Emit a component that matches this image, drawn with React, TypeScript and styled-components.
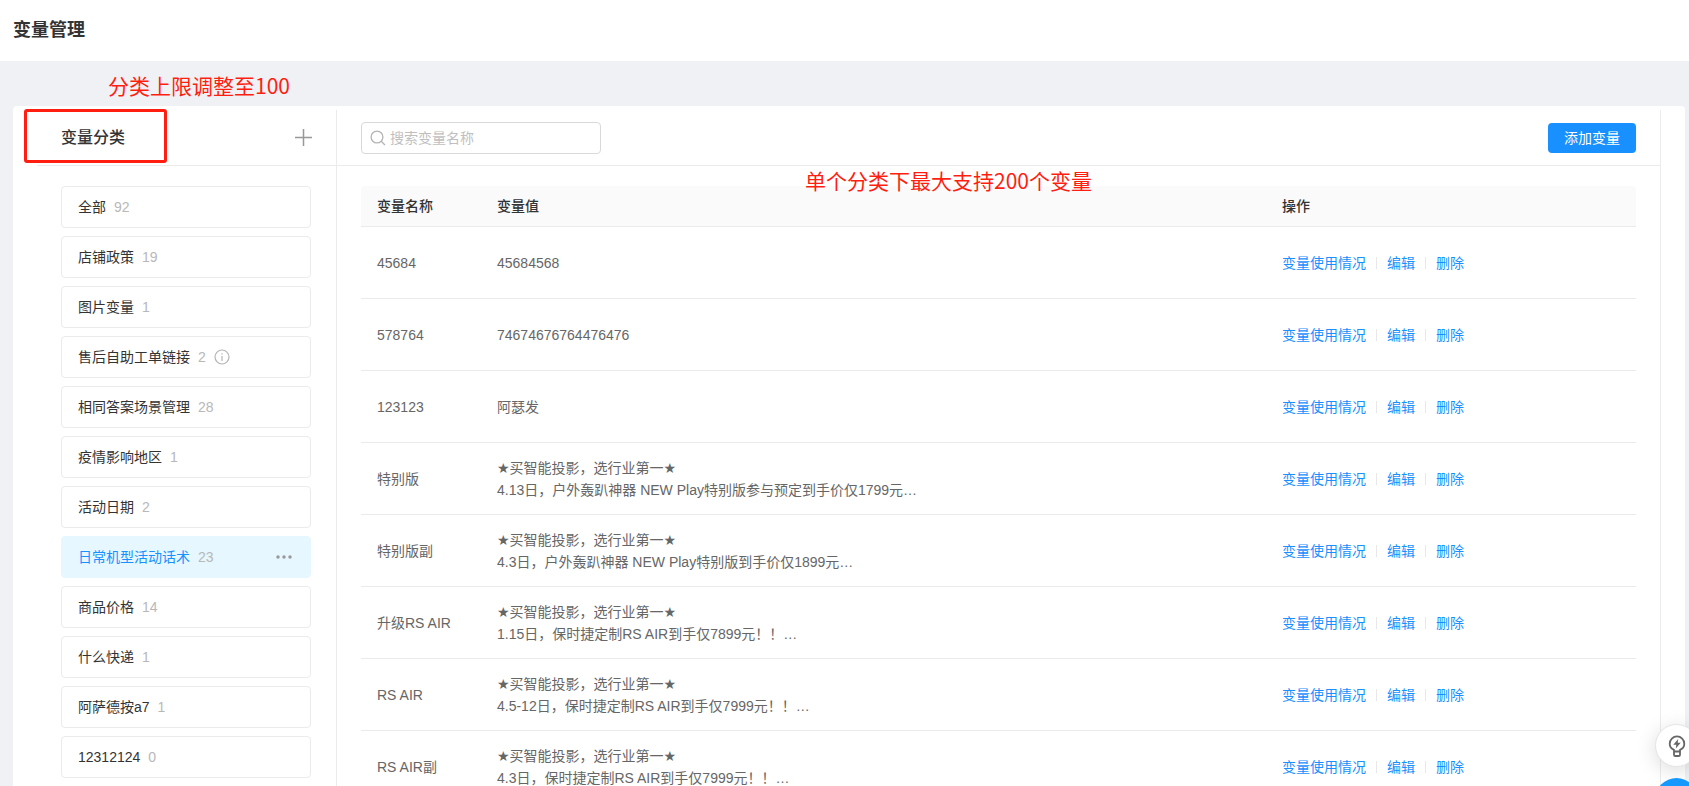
import React from "react";
import styled, { createGlobalStyle } from "styled-components";

const GlobalStyle = createGlobalStyle`
  * { box-sizing: border-box; }
  body {
    margin: 0;
    color: #333;
    background: #f0f1f5;
    font-family: "Liberation Sans", "DejaVu Sans", "Noto Sans CJK SC", sans-serif;
    font-size: 14px;
    line-height: 22px;
  }
  button, input { font: inherit; }
`;

const Page = styled.div`
  display: flex;
  flex-direction: column;
  height: 100vh;
  overflow: hidden;
`;

const TopBar = styled.header`
  flex: none;
  padding: 16px 13px 17px;
  background: #fff;
`;

const PageTitle = styled.h1`
  margin: 0;
  font-size: 18px;
  line-height: 28px;
  font-weight: 700;
`;

const Scroller = styled.main`
  position: relative;
  flex: 1;
  min-height: 0;
  overflow-y: auto;
  scrollbar-width: none;
  padding: 45px 4px 0 13px;
`;

const Card = styled.div`
  display: flex;
  min-height: 100%;
  padding: 4px 24px 0;
  background: #fff;
  border-radius: 4px;
`;

const Sidebar = styled.aside`
  flex: 0 0 300px;
  border-right: 1px solid #ebebeb;
`;

const Content = styled.section`
  flex: 1;
  min-width: 0;
  border-right: 1px solid #ebebeb;
`;

const PanelHeader = styled.div`
  display: flex;
  align-items: center;
  justify-content: space-between;
  height: 56px;
  padding: 0 24px;
  border-bottom: 1px solid #ebebeb;
`;

const SidebarTitle = styled.h2`
  margin: 0;
  font-size: 16px;
  line-height: 24px;
  font-weight: 500;
`;

const IconButton = styled.button`
  display: flex;
  padding: 0;
  border: 0;
  background: none;
  color: #999;
  cursor: pointer;
`;

const CategoryList = styled.ul`
  display: flex;
  flex-direction: column;
  gap: 8px;
  margin: 0;
  padding: 20px 25px 20px 24px;
  list-style: none;
`;

const CategoryItem = styled.li<{ $active?: boolean }>`
  display: flex;
  align-items: center;
  gap: 8px;
  height: 42px;
  padding: 0 16px;
  border: 1px solid ${(p) => (p.$active ? "#e6f7ff" : "#ebebeb")};
  border-radius: 4px;
  background: ${(p) => (p.$active ? "#e6f7ff" : "#fff")};
  color: ${(p) => (p.$active ? "#1890ff" : "#333")};
`;

const CategoryButton = styled.button`
  display: flex;
  gap: 8px;
  padding: 0;
  border: 0;
  background: none;
  color: inherit;
  cursor: pointer;
`;

const Count = styled.span`
  color: #b8b8b8;
`;

const InfoIcon = styled.svg`
  flex: none;
  color: #b4b4b4;
`;

const MoreButton = styled(IconButton)`
  margin-left: auto;
`;

const SearchBox = styled.label`
  display: flex;
  align-items: center;
  gap: 4px;
  width: 240px;
  height: 32px;
  padding: 0 8px;
  border: 1px solid #d9d9d9;
  border-radius: 4px;
  color: #b4b4b4;
`;

const SearchInput = styled.input`
  flex: 1;
  min-width: 0;
  padding: 0;
  border: 0;
  outline: 0;
  background: none;
  color: #333;
  &::placeholder { color: #bfbfbf; opacity: 1; }
`;

const PrimaryButton = styled.button`
  height: 30px;
  padding: 0 16px;
  border: 0;
  border-radius: 4px;
  background: #1890ff;
  color: #fff;
  cursor: pointer;
`;

const TableWrap = styled.div`
  padding: 20px 24px;
`;

const Table = styled.table`
  width: 100%;
  table-layout: fixed;
  border-collapse: separate;
  border-spacing: 0;
`;

const HeadCell = styled.th<{ $width?: number }>`
  width: ${(p) => (p.$width ? `${p.$width}px` : "auto")};
  height: 41px;
  padding: 0 16px;
  border-bottom: 1px solid #ebebeb;
  background: #fafafa;
  font-weight: 500;
  text-align: left;
  &:first-child { border-top-left-radius: 4px; }
  &:last-child { border-top-right-radius: 4px; }
`;

const Cell = styled.td`
  height: 72px;
  padding: 0 16px;
  border-bottom: 1px solid #ebebeb;
  color: #666;
  white-space: pre-line;
`;

const Actions = styled.div`
  display: flex;
  align-items: center;
`;

const ActionLink = styled.a`
  color: #1890ff;
  text-decoration: none;
  & + & {
    display: flex;
    align-items: center;
  }
  & + &::before {
    content: "";
    width: 1px;
    height: 12px;
    margin: 0 10px;
    background: #e8e8e8;
  }
`;

const Note = styled.p<{ $x: string; $y: number }>`
  position: absolute;
  left: ${(p) => p.$x};
  top: ${(p) => p.$y}px;
  margin: 0;
  color: #ff1e10;
  font-family: "Noto Sans CJK SC", sans-serif;
  font-size: 21px;
  line-height: 28px;
  font-weight: 400;
  white-space: nowrap;
  pointer-events: none;
`;

const Highlight = styled.div`
  position: absolute;
  left: 24px;
  top: 48px;
  width: 143px;
  height: 54px;
  border: 3px solid #ff1e10;
  border-radius: 3px;
  pointer-events: none;
`;

const FloatingTools = styled.div`
  position: fixed;
  right: -9px;
  bottom: -35px;
  display: flex;
  flex-direction: column;
  gap: 11px;
`;

const RoundButton = styled.button<{ $primary?: boolean }>`
  display: flex;
  align-items: center;
  justify-content: center;
  width: 43px;
  height: 43px;
  padding: 0;
  border: ${(p) => (p.$primary ? "0" : "1px solid #e4e4e6")};
  border-radius: 50%;
  background: ${(p) => (p.$primary ? "#1599ff" : "#fff")};
  box-shadow: ${(p) => (p.$primary ? "none" : "0 4px 20px rgba(0, 0, 0, 0.14)")};
  color: #666;
  cursor: pointer;
`;

const categories = [
  { name: "全部", count: 92 },
  { name: "店铺政策", count: 19 },
  { name: "图片变量", count: 1 },
  { name: "售后自助工单链接", count: 2, info: true },
  { name: "相同答案场景管理", count: 28 },
  { name: "疫情影响地区", count: 1 },
  { name: "活动日期", count: 2 },
  { name: "日常机型活动话术", count: 23, active: true },
  { name: "商品价格", count: 14 },
  { name: "什么快递", count: 1 },
  { name: "阿萨德按a7", count: 1 },
  { name: "12312124", count: 0 },
];

const slogan = "★买智能投影，选行业第一★\n";

const variables = [
  { name: "45684", value: "45684568" },
  { name: "578764", value: "74674676764476476" },
  { name: "123123", value: "阿瑟发" },
  { name: "特别版", value: slogan + "4.13日，户外轰趴神器 NEW Play特别版参与预定到手价仅1799元…" },
  { name: "特别版副", value: slogan + "4.3日，户外轰趴神器 NEW Play特别版到手价仅1899元…" },
  { name: "升级RS AIR", value: slogan + "1.15日，保时捷定制RS AIR到手仅7899元！！…" },
  { name: "RS AIR", value: slogan + "4.5-12日，保时捷定制RS AIR到手仅7999元！！…" },
  { name: "RS AIR副", value: slogan + "4.3日，保时捷定制RS AIR到手仅7999元！！…" },
];

export default function App() {
  return (
    <Page>
      <GlobalStyle />
      <TopBar>
        <PageTitle>变量管理</PageTitle>
      </TopBar>
      <Scroller>
        <Card>
          <Sidebar>
            <PanelHeader>
              <SidebarTitle>变量分类</SidebarTitle>
              <IconButton aria-label="添加分类">
                <svg width="17" height="17" viewBox="0 0 17 17" fill="none" stroke="currentColor" strokeWidth="1.5">
                  <path d="M8.5 0v17M0 8.5h17" />
                </svg>
              </IconButton>
            </PanelHeader>
            <CategoryList>
              {categories.map((c) => (
                <CategoryItem key={c.name} $active={c.active}>
                  <CategoryButton>
                    <span>{c.name}</span>
                    <Count>{c.count}</Count>
                  </CategoryButton>
                  {c.info && (
                    <InfoIcon width="16" height="16" viewBox="0 0 16 16" fill="none" stroke="currentColor" strokeWidth="1.2">
                      <circle cx="8" cy="8" r="7" />
                      <path d="M8 7v5M8 4.200v1.400" />
                    </InfoIcon>
                  )}
                  {c.active && (
                    <MoreButton aria-label="更多">
                      <svg width="20" height="16" viewBox="0 0 20 16" fill="currentColor">
                        <circle cx="4" cy="8" r="1.7" />
                        <circle cx="10" cy="8" r="1.7" />
                        <circle cx="16" cy="8" r="1.7" />
                      </svg>
                    </MoreButton>
                  )}
                </CategoryItem>
              ))}
            </CategoryList>
          </Sidebar>
          <Content>
            <PanelHeader>
              <SearchBox>
                <svg width="16" height="16" viewBox="0 0 16 16" fill="none" stroke="currentColor" strokeWidth="1.3">
                  <circle cx="7" cy="7" r="5.9" />
                  <path d="M11.2 11.2l3.800 3.800" />
                </svg>
                <SearchInput type="text" aria-label="搜索变量名称" placeholder="搜索变量名称" />
              </SearchBox>
              <PrimaryButton>添加变量</PrimaryButton>
            </PanelHeader>
            <TableWrap>
              <Table>
                <thead>
                  <tr>
                    <HeadCell $width={120}>变量名称</HeadCell>
                    <HeadCell>变量值</HeadCell>
                    <HeadCell $width={370}>操作</HeadCell>
                  </tr>
                </thead>
                <tbody>
                  {variables.map((v) => (
                    <tr key={v.name}>
                      <Cell>{v.name}</Cell>
                      <Cell>{v.value}</Cell>
                      <Cell>
                        <Actions>
                          <ActionLink href="#usage">变量使用情况</ActionLink>
                          <ActionLink href="#edit">编辑</ActionLink>
                          <ActionLink href="#delete">删除</ActionLink>
                        </Actions>
                      </Cell>
                    </tr>
                  ))}
                </tbody>
              </Table>
            </TableWrap>
          </Content>
        </Card>
        <Highlight />
        <Note $x="108px" $y={10}>分类上限调整至100</Note>
        <Note $x="805px" $y={105}>单个分类下最大支持200个变量</Note>
      </Scroller>
      <FloatingTools>
        <RoundButton aria-label="提示">
          <svg width="18" height="22" viewBox="0 0 18 22" fill="none" stroke="currentColor" strokeWidth="1.8" strokeLinejoin="round">
            <path d="M6 16.500v-1.700C3.300 13.700 1.700 11.400 1.700 8.700a7.300 7.300 0 0 1 14.600 0c0 2.700-1.600 5-4.300 6.100v1.700z" />
            <path d="M6 16.500v3.200q0 1.300 1.300 1.300h3.400q1.300 0 1.300-1.300v-3.200" />
            <path d="M10.200 4L5.300 9.700h3L7.800 13.400l4.900-5.700h-3z" fill="currentColor" stroke="none" />
          </svg>
        </RoundButton>
        <RoundButton $primary aria-label="客服" />
      </FloatingTools>
    </Page>
  );
}
